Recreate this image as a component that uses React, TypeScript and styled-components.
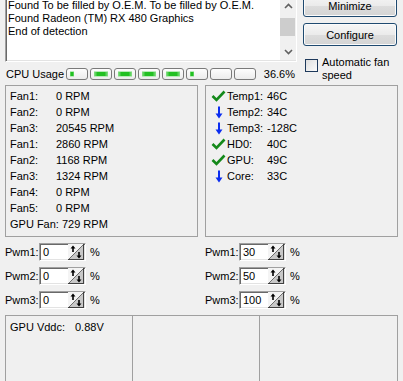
import React from "react";
import styled, { createGlobalStyle } from "styled-components";

const GlobalStyle = createGlobalStyle`
  html, body {
    margin: 0;
    padding: 0;
    background: #f0f0f0;
    overflow: hidden;
  }
  body {
    font-family: "Liberation Sans", Tahoma, Arial, sans-serif;
    font-size: 11px;
    color: #000;
  }
`;

const Window = styled.div`
  width: 403px;
  height: 381px;
  overflow: hidden;
  background: #f0f0f0;
`;

const Scrolled = styled.div`
  margin-top: -10px;
`;

const Top = styled.div`
  display: grid;
  grid-template-columns: 292px 94px;
  column-gap: 6px;
  padding-left: 5px;
`;

const LeftCol = styled.div`
  display: flex;
  flex-direction: column;
`;

const RightCol = styled.div`
  display: flex;
  flex-direction: column;
  padding-top: 4px;
`;

const TextBox = styled.div`
  height: 72px;
  box-sizing: border-box;
  background: #fff;
  border-top: 1px solid #a0a0a0;
  border-left: 1px solid #a0a0a0;
  border-right: 1px solid #fff;
  border-bottom: 1px solid #fff;
  box-shadow: inset 1px 1px #696969, inset -1px -1px #e3e3e3;
  display: flex;
`;

const Lines = styled.div`
  flex: 1;
  padding: 8px 0 0 2px;
  line-height: 13px;
  white-space: nowrap;
  overflow: hidden;
`;

const ScrollBar = styled.div`
  width: 16px;
  background: #f0f0f0;
  display: flex;
  flex-direction: column;
  align-items: center;
  margin: 1px 0;
`;

const ScrollArrow = styled.div<{ $offset?: number }>`
  height: 16px;
  width: 16px;
  margin-top: ${(p) => p.$offset ?? 0}px;
  display: flex;
  align-items: center;
  justify-content: center;
`;

const ScrollTrack = styled.div`
  flex: 1;
  width: 16px;
  display: flex;
  flex-direction: column;
`;

const Thumb = styled.div<{ $top: number; $h: number }>`
  margin-top: ${(p) => p.$top}px;
  height: ${(p) => p.$h}px;
  width: 15px;
  background: #cdcdcd;
`;

const CpuRow = styled.div`
  margin-top: 5px;
  height: 13px;
  display: flex;
  align-items: center;
`;

const CpuLabel = styled.span`
  width: 60px;
  padding-left: 1px;
`;

const Segments = styled.div`
  display: flex;
  gap: 2px;
`;

const Segment = styled.div`
  width: 22px;
  height: 12px;
  box-sizing: border-box;
  border: 1px solid #7a7a7a;
  border-radius: 3px;
  background: linear-gradient(#fdfdfd, #ececec);
  display: flex;
  align-items: center;
  padding-left: 3px;
`;

const Fill = styled.div<{ $w: number }>`
  width: ${(p) => p.$w}px;
  height: 4px;
  background: linear-gradient(90deg, #8be08b, #22c022 25%, #22c022 75%, #8be08b);
  box-shadow: 0 -1px #b8eab8, 0 1px #b8eab8;
`;

const Percent = styled.span`
  margin-left: auto;
  padding-right: 2px;
`;

const Button = styled.button`
  width: 94px;
  height: 23px;
  box-sizing: border-box;
  border: 1px solid #1f4a70;
  border-radius: 3px;
  background: linear-gradient(#f6f6f6 0%, #ebebeb 50%, #dddddd 51%, #d4d4d4 100%);
  box-shadow: inset 0 0 0 1px #fbfbfb;
  font: inherit;
  color: #000;
  padding: 0;
  & + & {
    margin-top: 6px;
  }
`;

const CheckRow = styled.label`
  margin-top: 9px;
  display: flex;
  align-items: flex-start;
  line-height: 13px;
  padding-top: 1px;
`;

const CheckBox = styled.span`
  width: 13px;
  height: 13px;
  box-sizing: border-box;
  border: 1px solid #1e395b;
  background: linear-gradient(135deg, #dedede, #fbfbfb);
  margin: 3px 4px 0 2px;
  flex: none;
`;

const Panels = styled.div`
  display: flex;
  gap: 7px;
  padding: 0 5px;
  margin-top: 3px;
`;

const GroupBox = styled.div`
  width: 193px;
  height: 152px;
  box-sizing: border-box;
  border: 1px solid #a0a0a0;
  padding: 2px 0 0 4px;
`;

const FanRow = styled.div`
  display: flex;
  height: 16px;
  align-items: center;
`;

const FanLabel = styled.span`
  width: 46px;
`;

const TempRow = styled.div`
  display: flex;
  height: 16px;
  align-items: center;
`;

const TempIcon = styled.span`
  width: 17px;
  display: flex;
  align-items: center;
  justify-content: center;
`;

const TempLabel = styled.span`
  width: 40px;
`;

const PwmGrid = styled.div`
  display: grid;
  grid-template-columns: 200px 198px;
  row-gap: 6px;
  padding-left: 5px;
  margin-top: 6px;
`;

const PwmRow = styled.div`
  display: flex;
  align-items: center;
  height: 18px;
`;

const PwmLabel = styled.span`
  width: 34px;
`;

const SpinInput = styled.div`
  width: 47px;
  height: 18px;
  box-sizing: border-box;
  background: #fff;
  border-top: 1px solid #a0a0a0;
  border-left: 1px solid #a0a0a0;
  border-right: 1px solid #fff;
  border-bottom: 1px solid #fff;
  box-shadow: inset 1px 1px #696969, inset -1px -1px #e3e3e3;
  display: flex;
  align-items: center;
  padding-left: 3px;
`;

const SpinValue = styled.span`
  flex: 1;
`;

const SpinGlyph = styled.span`
  display: flex;
  margin-right: 1px;
`;

const Unit = styled.span`
  margin-left: 4px;
`;

const Bottom = styled.div`
  margin: 6px 5px 0 5px;
  height: 80px;
  box-sizing: border-box;
  border: 1px solid #a0a0a0;
  border-bottom: none;
  display: grid;
  grid-template-columns: 126px 127px 1fr;
`;

const Cell = styled.div<{ $divider?: boolean }>`
  border-left: ${(p) => (p.$divider ? "1px solid #a0a0a0" : "none")};
  padding: 5px 0 0 4px;
  display: flex;
  align-items: flex-start;
  line-height: 13px;
`;

const VddcLabel = styled.span`
  width: 65px;
`;

const Chevron = ({ down }: { down?: boolean }) => (
  <svg width="9" height="6" viewBox="0 0 9 6">
    <polyline
      points={down ? "1,1 4.5,4.5 8,1" : "1,5 4.5,1.5 8,5"}
      fill="none"
      stroke="#606060"
      strokeWidth="1.6"
    />
  </svg>
);

const Check = () => (
  <svg width="15" height="12" viewBox="0 0 15 12">
    <polyline points="1.5,6 5.5,10 13.5,1.5" fill="none" stroke="#14891a" strokeWidth="2.6" />
  </svg>
);

const Down = () => (
  <svg width="8" height="13" viewBox="0 0 8 13">
    <line x1="4" y1="0.5" x2="4" y2="9" stroke="#0b2df0" strokeWidth="2" />
    <polygon points="0.5,7.5 7.5,7.5 4,12.5" fill="#0b2df0" />
  </svg>
);

const Spinner = () => (
  <svg width="16" height="16" viewBox="0 0 16 16">
    <rect x="0" y="0" width="16" height="16" fill="#f4f4f4" />
    <polygon points="16,0 16,16 0,16" fill="#c8c8c8" />
    <line x1="0.5" y1="15.5" x2="15.5" y2="0.5" stroke="#6e6e6e" strokeWidth="1" />
    <line x1="15.5" y1="0" x2="15.5" y2="16" stroke="#404040" />
    <line x1="0" y1="15.5" x2="16" y2="15.5" stroke="#404040" />
    <line x1="5" y1="3" x2="5" y2="8" stroke="#000" strokeWidth="1.6" />
    <polygon points="2.5,4.5 7.5,4.5 5,1.5" fill="#000" />
    <line x1="11" y1="8" x2="11" y2="13" stroke="#000" strokeWidth="1.6" />
    <polygon points="8.5,11.5 13.5,11.5 11,14.5" fill="#000" />
  </svg>
);

const logLines = [
  "Found To be filled by O.E.M. To be filled by O.E.M.",
  "Found Radeon (TM) RX 480 Graphics",
  "End of detection",
];

// width of the green bar in each cpu segment
const fills = [4, 14, 14, 14, 14, 4, 0, 0];

const fans = [
  ["Fan1:", "0 RPM"],
  ["Fan2:", "0 RPM"],
  ["Fan3:", "20545 RPM"],
  ["Fan1:", "2860 RPM"],
  ["Fan2:", "1168 RPM"],
  ["Fan3:", "1324 RPM"],
  ["Fan4:", "0 RPM"],
  ["Fan5:", "0 RPM"],
];

const temps: [boolean, string, string][] = [
  [true, "Temp1:", "46C"],
  [false, "Temp2:", "34C"],
  [false, "Temp3:", "-128C"],
  [true, "HD0:", "40C"],
  [true, "GPU:", "49C"],
  [false, "Core:", "33C"],
];

const pwms = [
  ["Pwm1:", "0", "Pwm1:", "30"],
  ["Pwm2:", "0", "Pwm2:", "50"],
  ["Pwm3:", "0", "Pwm3:", "100"],
];

const PwmControl = ({ label, value }: { label: string; value: string }) => (
  <PwmRow>
    <PwmLabel>{label}</PwmLabel>
    <SpinInput>
      <SpinValue>{value}</SpinValue>
      <SpinGlyph>
        <Spinner />
      </SpinGlyph>
    </SpinInput>
    <Unit>%</Unit>
  </PwmRow>
);

const App = () => {
  return (
    <>
      <GlobalStyle />
      <Window>
        <Scrolled>
          <Top>
            <LeftCol>
              <TextBox>
                <Lines>
                  {logLines.map((l, i) => (
                    <div key={i}>{l}</div>
                  ))}
                </Lines>
                <ScrollBar>
                  <ScrollArrow $offset={6}>
                    <Chevron />
                  </ScrollArrow>
                  <ScrollTrack>
                    <Thumb $top={4} $h={18} />
                  </ScrollTrack>
                  <ScrollArrow>
                    <Chevron down />
                  </ScrollArrow>
                </ScrollBar>
              </TextBox>
              <CpuRow>
                <CpuLabel>CPU Usage</CpuLabel>
                <Segments>
                  {fills.map((w, i) => (
                    <Segment key={i}>{w > 0 && <Fill $w={w} />}</Segment>
                  ))}
                </Segments>
                <Percent>36.6%</Percent>
              </CpuRow>
            </LeftCol>
            <RightCol>
              <Button>Minimize</Button>
              <Button>Configure</Button>
              <CheckRow>
                <CheckBox />
                <span>
                  Automatic fan
                  <br />
                  speed
                </span>
              </CheckRow>
            </RightCol>
          </Top>

          <Panels>
            <GroupBox>
              {fans.map(([l, v], i) => (
                <FanRow key={i}>
                  <FanLabel>{l}</FanLabel>
                  <span>{v}</span>
                </FanRow>
              ))}
              <FanRow>GPU Fan: 729 RPM</FanRow>
            </GroupBox>
            <GroupBox>
              {temps.map(([ok, l, v], i) => (
                <TempRow key={i}>
                  <TempIcon>{ok ? <Check /> : <Down />}</TempIcon>
                  <TempLabel>{l}</TempLabel>
                  <span>{v}</span>
                </TempRow>
              ))}
            </GroupBox>
          </Panels>

          <PwmGrid>
            {pwms.map(([l1, v1, l2, v2], i) => (
              <React.Fragment key={i}>
                <PwmControl label={l1} value={v1} />
                <PwmControl label={l2} value={v2} />
              </React.Fragment>
            ))}
          </PwmGrid>

          <Bottom>
            <Cell>
              <VddcLabel>GPU Vddc:</VddcLabel>
              <span>0.88V</span>
            </Cell>
            <Cell $divider />
            <Cell $divider />
          </Bottom>
        </Scrolled>
      </Window>
    </>
  );
};

export default App;
